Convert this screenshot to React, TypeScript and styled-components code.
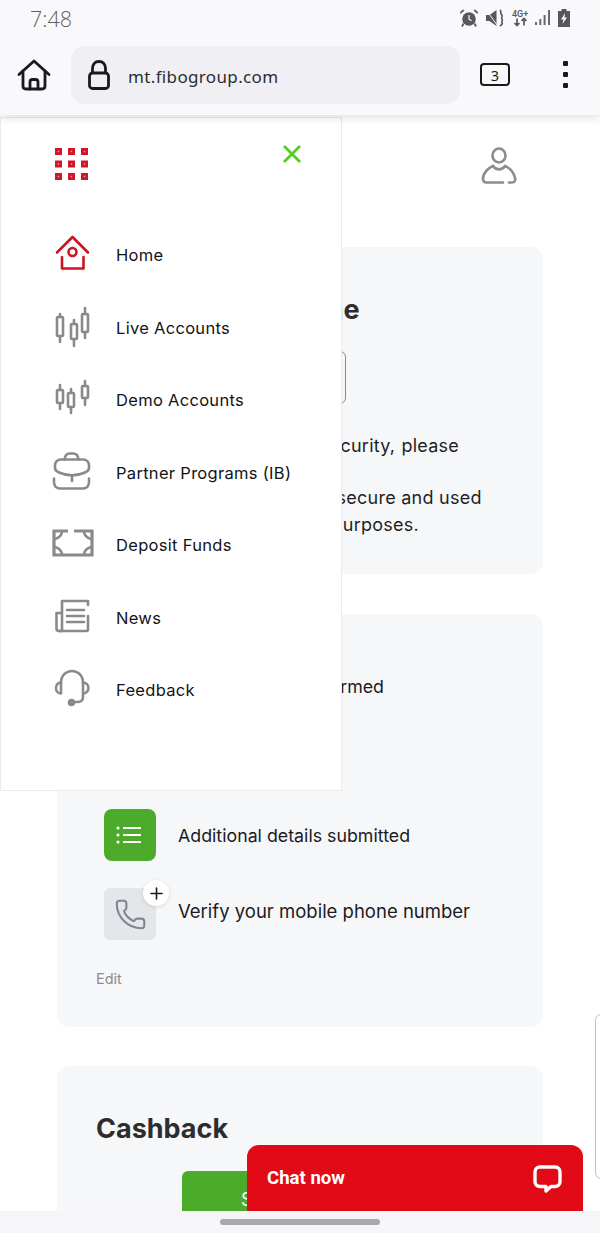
import React from "react";
import styled, { createGlobalStyle } from "styled-components";
import { Phone, Plus } from "lucide-react";

const GlobalStyle = createGlobalStyle`
  html, body {
    margin: 0;
    padding: 0;
    background: #fff;
  }
  * {
    box-sizing: border-box;
  }
`;

const Screen = styled.div`
  position: relative;
  width: 600px;
  height: 1233px;
  overflow: hidden;
  background: #fff;
  display: flex;
  flex-direction: column;
  font-family: Inter, "Liberation Sans", sans-serif;
  color: #1b1b1f;
`;

const Chrome = styled.header`
  position: relative;
  z-index: 3;
  flex: none;
  height: 115px;
  background: #f9f9fc;
  box-shadow: 0 2px 10px rgba(0, 0, 0, 0.14);
`;

const StatusBar = styled.div`
  height: 36px;
  padding: 0 30px;
  display: flex;
  align-items: center;
  justify-content: space-between;
`;

const Clock = styled.span`
  font-family: "Open Sans", sans-serif;
  font-size: 21.5px;
  font-weight: 300;
  color: #5f5f63;
`;

const StatusIcons = styled.div`
  display: flex;
  align-items: center;
`;

const BrowserBar = styled.div`
  height: 79px;
  display: flex;
  align-items: center;
  padding: 0 0 0 17px;
  margin-top: -1px;
`;

const UrlPill = styled.div`
  width: 389px;
  height: 58px;
  margin-left: 20px;
  padding-left: 17px;
  display: flex;
  align-items: center;
  gap: 18px;
  background: #f0f0f4;
  border-radius: 14px;
`;

const UrlText = styled.span`
  padding-top: 3px;
  font-family: "Noto Sans", sans-serif;
  font-size: 17px;
  letter-spacing: 0.35px;
  color: #2c2c30;
`;

const TabCount = styled.div`
  width: 30px;
  height: 23px;
  margin-left: 20px;
  border: 2px solid #1a1a1c;
  border-radius: 4px;
  display: flex;
  align-items: center;
  justify-content: center;
  font-family: "Noto Sans", sans-serif;
  font-size: 14.5px;
  color: #1a1a1c;
`;

const MoreDots = styled.div`
  margin-left: 53px;
  display: flex;
  flex-direction: column;
  gap: 6px;

  i {
    display: block;
    width: 5px;
    height: 5px;
    background: #1a1a1c;
    border-radius: 1px;
  }
`;

const Main = styled.main`
  flex: 1;
  min-height: 0;
  overflow: hidden;
  padding: 0 57px;
`;

const TopRow = styled.div`
  height: 132px;
  padding: 32px 26px 0 0;
  display: flex;
  justify-content: flex-end;
`;

const Card = styled.section`
  background: #f6f7f9;
  border-radius: 12px;
  padding: 0 39px;
  margin-bottom: 40px;
`;

const PhoneCard = styled(Card)`
  height: 327px;
  padding-top: 47px;
`;

const StepsCard = styled(Card)`
  height: 413px;
  padding-top: 46px;
  margin-bottom: 39px;
`;

const CashbackCard = styled(Card)`
  height: 200px;
  padding-top: 47px;
`;

const Title = styled.h2`
  margin: 0;
  font-size: 27px;
  font-weight: 700;
  line-height: 32px;
  color: #2d2d30;
  white-space: nowrap;
`;

const PhoneInput = styled.div`
  width: 250px;
  height: 53px;
  margin-top: 25px;
  border: 1px solid #8a8a8a;
  border-radius: 6px;
`;

const Copy = styled.p`
  margin: 28px 0 0;
  font-size: 18px;
  letter-spacing: 0.25px;
  word-spacing: 0.8px;
  line-height: 27px;
  color: #1f1f23;
  white-space: nowrap;
`;

const SecondCopy = styled(Copy)`
  margin-top: 25px;
  word-spacing: 0;
`;

const StepList = styled.div`
  display: flex;
  flex-direction: column;
  padding-left: 8px;
`;

const Step = styled.div<{ $gap: number }>`
  display: flex;
  align-items: center;
  gap: 22px;
  margin-bottom: ${(p) => p.$gap}px;
  color: #1b1b1f;
  white-space: nowrap;
`;

const StepLabel = styled.span<{ $large?: boolean }>`
  font-size: ${(p) => (p.$large ? "18.5px" : "17.8px")};
  margin-bottom: ${(p) => (p.$large ? "7px" : "0")};
`;

const StepBadge = styled.div<{ $done?: boolean }>`
  position: relative;
  flex: none;
  width: 52px;
  height: 52px;
  border-radius: ${(p) => (p.$done ? "8px" : "6px")};
  background: ${(p) => (p.$done ? "#4dab2b" : "#e4e6ea")};
  display: flex;
  align-items: center;
  justify-content: center;
`;

const AddBadge = styled.span`
  position: absolute;
  top: -8px;
  right: -13px;
  width: 26px;
  height: 26px;
  border-radius: 50%;
  background: #fff;
  box-shadow: 0 1px 4px rgba(0, 0, 0, 0.12);
  display: flex;
  align-items: center;
  justify-content: center;
`;

const EditLink = styled.div`
  margin-top: 30px;
  font-size: 14.5px;
  color: #8b8b8f;
`;

const SubscribeButton = styled.div`
  width: 220px;
  height: 60px;
  margin: 26px 0 0 86px;
  border-radius: 6px;
  background: #4dab2b;
  color: #fff;
  font-size: 18px;
  padding: 18px 0 0 59px;
`;

const SideMenu = styled.nav`
  position: absolute;
  z-index: 2;
  top: 117px;
  left: 0;
  width: 342px;
  height: 674px;
  padding: 101px 0 0 50px;
  background: #fff;
  border: 1px solid #ececec;
`;

const MenuGrid = styled.svg`
  position: absolute;
  top: 30px;
  left: 54px;
`;

const MenuClose = styled.svg`
  position: absolute;
  top: 26px;
  left: 281px;
`;

const MenuRow = styled.a`
  height: 72.5px;
  display: flex;
  align-items: center;
  gap: 21px;
  font-family: Inter, sans-serif;
  font-size: 16.5px;
  letter-spacing: 0.3px;
  color: #131317;
`;

const SideTab = styled.div`
  position: absolute;
  z-index: 1;
  top: 1014px;
  left: 595px;
  width: 20px;
  height: 165px;
  background: #fff;
  border: 1.5px solid #c4c4c4;
  border-radius: 6px;
`;

const ChatWidget = styled.div`
  position: absolute;
  z-index: 2;
  left: 247px;
  top: 1145px;
  width: 336px;
  height: 66px;
  padding: 20px 21px 0 20px;
  display: flex;
  align-items: flex-start;
  justify-content: space-between;
  background: #e20a17;
  border-radius: 12px 12px 0 0;
  font-family: Roboto, sans-serif;
  font-size: 18.6px;
  font-weight: 700;
  line-height: 26px;
  color: #fff;
`;

const NavBar = styled.div`
  position: absolute;
  z-index: 3;
  left: 0;
  right: 0;
  bottom: 0;
  height: 22px;
  background: #f6f6f9;
  display: flex;
  justify-content: center;
  padding-top: 8px;

  i {
    display: block;
    width: 160px;
    height: 6px;
    border-radius: 3px;
    background: #a9a9ab;
  }
`;

const MENU_RED = "#d0121f";
const MENU_GREY = "#8a8a8a";
const STATUS_GREY = "#58585c";

const Candle = ({ x, top, bottom, wickTop, wickBottom }: { x: number; top: number; bottom: number; wickTop: number; wickBottom: number }) => (
  <>
    <rect x={x - 3} y={top} width={6} height={bottom - top} rx={1} />
    <path d={`M${x} ${wickTop}V${top}M${x} ${bottom}V${wickBottom}`} />
  </>
);

const Icon = ({ children, color = MENU_GREY }: { children: React.ReactNode; color?: string }) => (
  <svg width="44" height="44" viewBox="0 0 44 44" fill="none" stroke={color} strokeWidth="2.6" strokeLinecap="round" strokeLinejoin="round" style={{ flex: "none" }}>
    {children}
  </svg>
);

const menuItems: { label: string; icon: React.ReactNode }[] = [
  {
    label: "Home",
    icon: (
      <Icon color={MENU_RED}>
        <path d="M6 19.5 21.5 4 37 19.5" />
        <path d="M11 24v11.5h21.500V24" />
        <circle cx="21.500" cy="19" r="4" />
      </Icon>
    ),
  },
  {
    label: "Live Accounts",
    icon: (
      <Icon>
        <Candle x={9} top={11} bottom={30} wickTop={8} wickBottom={36} />
        <Candle x={23} top={18} bottom={33} wickTop={14} wickBottom={40} />
        <Candle x={34} top={8} bottom={26} wickTop={2} wickBottom={32} />
      </Icon>
    ),
  },
  {
    label: "Demo Accounts",
    icon: (
      <Icon>
        <Candle x={9} top={12} bottom={25} wickTop={7} wickBottom={31} />
        <Candle x={20} top={15} bottom={29} wickTop={11} wickBottom={35} />
        <Candle x={34} top={8} bottom={20} wickTop={3} wickBottom={27} />
      </Icon>
    ),
  },
  {
    label: "Partner Programs (IB)",
    icon: (
      <Icon>
        <path d="M13.500 8.500c.5-4 2-6 5-6h4c3 0 4.500 2 5 6" />
        <path d="M9 8.500h23c3.500 0 6 2.500 6 6v2.500c0 2-1.500 3.500-4 4.500-8 3.500-18 3.500-26 0-2.500-1-4-2.500-4-4.500v-2.500c0-3.500 2.500-6 6-6Z" />
        <path d="M3 27.500v3.500c0 4 2.500 6.500 6 6.500h23c3.500 0 6-2.500 6-6.500v-3.500M21 25v5" />
      </Icon>
    ),
  },
  {
    label: "Deposit Funds",
    icon: (
      <Icon>
        <path d="M17 8H3v24h38V8H23" strokeLinecap="butt" strokeLinejoin="miter" strokeWidth="3.200" />
        <path d="M11 9c-.5 3-3.500 6-7 7M33 9c.5 3 3.500 6 7 7M11 31c-.5-3-3.500-6-7-7M33 31c.5-3 3.500-6 7-7" strokeWidth="2.600" />
      </Icon>
    ),
  },
  {
    label: "News",
    icon: (
      <Icon>
        <path d="M37 9V5H11v30H8c-1.500 0-2.500-1-2.500-2.500V17H11" />
        <path d="M8 35h27.500c1 0 1.500-.5 1.500-1.500V20" />
        <path d="M16 14h17M16 20h17M16 26h17" />
      </Icon>
    ),
  },
  {
    label: "Feedback",
    icon: (
      <Icon>
        <path d="M10 15c0-7.500 5-12 11-12s11 4.500 11 12" />
        <path d="M10 14.500v11c-3 0-5-2.500-5-5.500s2-5.500 5-5.500ZM32 14.500v11c3 0 5.500-2.500 5.500-5.500s-2.500-5.500-5.500-5.500Z" />
        <path d="M32 26v3c0 3-2 5-5 5h-6" />
        <circle cx="20.500" cy="34.500" r="2.500" fill={MENU_GREY} />
      </Icon>
    ),
  },
];

const AlarmIcon = () => (
  <svg width="18" height="18" viewBox="0 0 18 18" fill={STATUS_GREY}>
    <circle cx="9" cy="10" r="6.800" />
    <path d="M.5 5 4.500 1.500 3 .5 0 3ZM17.500 5 13.500 1.500 15 .5 18 3Z" />
    <path d="M3.500 14.500 2 17.500M14.500 14.500 16 17.500" stroke={STATUS_GREY} strokeWidth="1.800" />
    <path d="M9 6v4.200l2.500 1.600" stroke="#f9f9fc" strokeWidth="1.200" fill="none" />
  </svg>
);

const MuteIcon = () => (
  <svg width="18" height="18" viewBox="0 0 18 18" fill={STATUS_GREY} style={{ marginLeft: 8 }}>
    <path d="M0 6h3.500L10.500 1v16l-7-5H0Z" />
    <path d="M1 2 11 16" stroke="#f9f9fc" strokeWidth="1" />
    <path d="M14 1c2 1.500-.5 3 1.500 4.500s-1 3 .5 4.500-1 2.500 0 3.500-.5 2.500-2 3.500" stroke={STATUS_GREY} strokeWidth="1.700" fill="none" />
  </svg>
);

const NetworkIcon = () => (
  <svg width="18" height="18" viewBox="0 0 18 18" style={{ marginLeft: 8 }}>
    <text x="0" y="7.500" fontFamily="Roboto, sans-serif" fontSize="9" fontWeight="500" fill={STATUS_GREY}>4G+</text>
    <path d="M5 9.500v7M2.500 14 5 16.500 7.500 14M12 16.500v-7M9.500 12 12 9.500l2.500 2.500" stroke={STATUS_GREY} strokeWidth="1.700" fill="none" />
  </svg>
);

const SignalIcon = () => (
  <svg width="15" height="18" viewBox="0 0 15 18" fill="#6a6a6e" style={{ marginLeft: 5 }}>
    <rect x="0" y="13" width="2" height="3" />
    <rect x="4.300" y="10" width="2" height="6" />
    <rect x="8.600" y="6" width="2" height="10" />
    <rect x="13" y="1" width="2" height="15" />
  </svg>
);

const BatteryIcon = () => (
  <svg width="12" height="18" viewBox="0 0 12 18" style={{ marginLeft: 8 }}>
    <path d="M3.500 0h5v2H12v16H0V2h3.500Z" fill={STATUS_GREY} />
    <path d="M7 4 3 10.500h2.500L4.500 15 9 8.500H6.500Z" fill="#f9f9fc" />
  </svg>
);

const HomeGlyph = () => (
  <svg width="34" height="32" viewBox="0 0 34 32" fill="none" stroke="#1a1a1c" strokeWidth="2.800" strokeLinejoin="round" strokeLinecap="round">
    <path d="M2 15.500 17 2l15 13.500" />
    <path d="M6 12v15c0 2 1 3 3 3h16c2 0 3-1 3-3V12" />
    <path d="M13 30v-7c0-1.500 1-2.500 2.500-2.500h3c1.500 0 2.500 1 2.500 2.500v7" />
  </svg>
);

const LockGlyph = () => (
  <svg width="22" height="30" viewBox="0 0 22 30" fill="none" stroke="#1a1a1c" strokeWidth="2.800" strokeLinejoin="round">
    <path d="M4.500 13V8.500C4.500 4.500 7 1.500 11 1.500s6.500 3 6.500 7V13" />
    <rect x="1.500" y="13" width="19" height="15.500" rx="3" />
  </svg>
);

const UserGlyph = () => (
  <svg width="36" height="38" viewBox="0 0 36 38" fill="none" stroke="#8d8d8d" strokeWidth="2.700" strokeLinecap="round" strokeLinejoin="round">
    <ellipse cx="18" cy="8.500" rx="6.500" ry="7" />
    <path d="M12 19C7 21 2.500 26 2 31c-.3 3 1 4.500 3.500 4.500H22" />
    <path d="M28 35.500h3c2.500 0 3.500-1.500 3-4.500-1-5-5-10-10-12-3 4.500-9 4.500-12 0" />
  </svg>
);

const ChatGlyph = () => (
  <svg width="29" height="28" viewBox="0 0 29 28" fill="none" stroke="#fff" strokeWidth="3.400" strokeLinejoin="round">
    <path d="M7 2h15c3 0 5 2 5 5v9.500c0 3-2 5-5 5h-4l-5 4.500v-4.500H7c-3 0-5-2-5-5V7c0-3 2-5 5-5Z" />
  </svg>
);

const ListGlyph = () => (
  <svg width="28" height="20" viewBox="0 0 28 20" fill="#fff">
    <circle cx="2" cy="3" r="1.600" />
    <circle cx="2" cy="10" r="1.600" />
    <circle cx="2" cy="17" r="1.600" />
    <rect x="7" y="2" width="18" height="2" />
    <rect x="7" y="9" width="18" height="2" />
    <rect x="7" y="16" width="18" height="2" />
  </svg>
);

const gridCells = [0, 12.5, 25].flatMap((y) => [0, 13, 26].map((x) => ({ x, y })));

export default function App() {
  return (
    <Screen>
      <GlobalStyle />
      <Chrome>
        <StatusBar>
          <Clock>7:48</Clock>
          <StatusIcons>
            <AlarmIcon />
            <MuteIcon />
            <NetworkIcon />
            <SignalIcon />
            <BatteryIcon />
          </StatusIcons>
        </StatusBar>
        <BrowserBar>
          <HomeGlyph />
          <UrlPill>
            <LockGlyph />
            <UrlText>mt.fibogroup.com</UrlText>
          </UrlPill>
          <TabCount>3</TabCount>
          <MoreDots>
            <i />
            <i />
            <i />
          </MoreDots>
        </BrowserBar>
      </Chrome>

      <Main>
        <TopRow>
          <UserGlyph />
        </TopRow>
        <PhoneCard>
          <Title>Confirm your phone</Title>
          <PhoneInput />
          <Copy>To help improve account security, please</Copy>
          <SecondCopy>
            Your phone number is kept secure and used
            <br />
            only for phone verification purposes.
          </SecondCopy>
        </PhoneCard>
        <StepsCard>
          <StepList>
            <Step $gap={22}>
              <StepBadge $done />
              <StepLabel>Your e-mail is confirmed</StepLabel>
            </Step>
            <Step $gap={23}>
              <StepBadge $done />
              <StepLabel>Identity verified</StepLabel>
            </Step>
            <Step $gap={27}>
              <StepBadge $done>
                <ListGlyph />
              </StepBadge>
              <StepLabel>Additional details submitted</StepLabel>
            </Step>
            <Step $gap={0}>
              <StepBadge>
                <Phone size={33} color="#7d8791" strokeWidth={1.5} />
                <AddBadge>
                  <Plus size={19} color="#1c1c20" strokeWidth={2} />
                </AddBadge>
              </StepBadge>
              <StepLabel $large>Verify your mobile phone number</StepLabel>
            </Step>
          </StepList>
          <EditLink>Edit</EditLink>
        </StepsCard>
        <CashbackCard>
          <Title>Cashback</Title>
          <SubscribeButton>Subscribe</SubscribeButton>
        </CashbackCard>
      </Main>

      <SideMenu>
        <MenuGrid width="33" height="33" viewBox="0 0 33 33">
          {gridCells.map((c) => (
            <g key={`${c.x}-${c.y}`}>
              <rect x={c.x} y={c.y} width="7" height="7" fill="#d3142a" />
              <rect x={c.x + 2.8} y={c.y + 2.8} width="1.400" height="1.400" fill="#f3a0a8" />
            </g>
          ))}
        </MenuGrid>
        <MenuClose width="20" height="20" viewBox="0 0 20 20" stroke="#4fd01e" strokeWidth="2.800" fill="none">
          <path d="M2 2l16 16M18 2 2 18" />
        </MenuClose>
        {menuItems.map((item) => (
          <MenuRow key={item.label}>
            {item.icon}
            {item.label}
          </MenuRow>
        ))}
      </SideMenu>

      <SideTab />
      <ChatWidget>
        Chat now
        <ChatGlyph />
      </ChatWidget>
      <NavBar>
        <i />
      </NavBar>
    </Screen>
  );
}
